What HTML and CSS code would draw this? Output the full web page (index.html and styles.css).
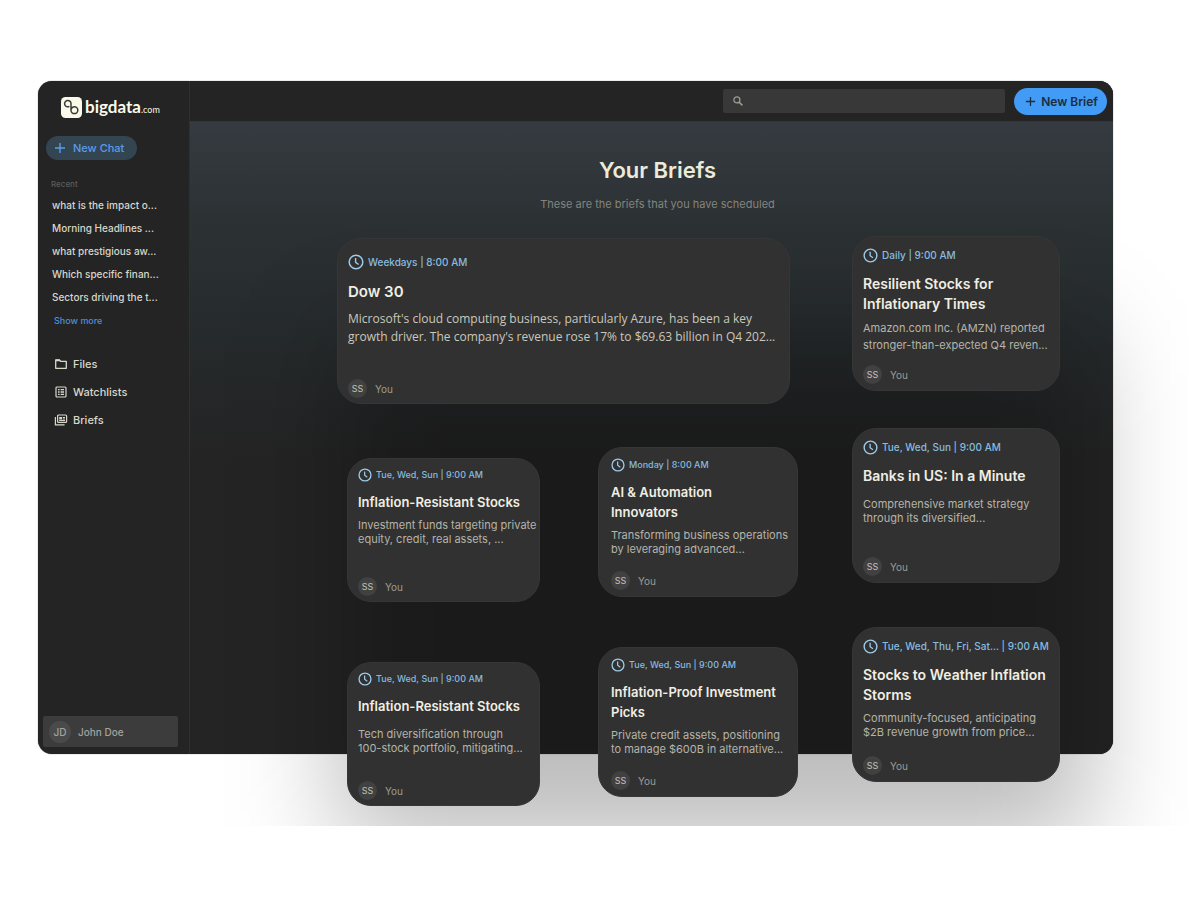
FILE: index.html
```html
<!DOCTYPE html>
<html lang="en">
<head>
    <meta charset="UTF-8">
    <title>Your Briefs</title>
    <link rel="stylesheet" href="styles.css">
</head>
<body>

<svg class="sprite" aria-hidden="true">
    <symbol id="clock" viewBox="0 0 16 16">
        <circle cx="8" cy="8" r="6.8" fill="none" stroke="currentColor" stroke-width="1.5"/>
        <path d="M7.6 4v4.3l3 2.2" fill="none" stroke="currentColor" stroke-width="1.4"/>
    </symbol>
    <symbol id="plus" viewBox="0 0 12 12">
        <path d="M6 1v10M1 6h10" fill="none" stroke="currentColor" stroke-width="1.4"/>
    </symbol>
</svg>

<div class="stage">
    <div class="app">
        <aside class="sidebar">
            <a class="logo" href="#">
                <svg viewBox="0 0 21 21" width="21" height="21" aria-hidden="true">
                    <rect width="21" height="21" rx="4.5" fill="#fbf9ea"/>
                    <path d="M8.4 9.4A3.2 3.2 0 1 1 10 6.6V13.2A3.4 3.4 0 1 0 13.4 9.8Q11 9.8 10 12.6" fill="none" stroke="#3a3a37" stroke-width="1.5"/>
                </svg>
                <span class="logo-name">bigdata<small>.com</small></span>
            </a>

            <button class="new-chat" type="button">
                <svg width="12" height="12" aria-hidden="true"><use href="#plus"/></svg>
                New Chat
            </button>

            <h2 class="recent-title">Recent</h2>
            <ul class="recent">
                <li><a href="#">what is the impact o...</a></li>
                <li><a href="#">Morning Headlines ...</a></li>
                <li><a href="#">what prestigious aw...</a></li>
                <li><a href="#">Which specific finan...</a></li>
                <li><a href="#">Sectors driving the t...</a></li>
            </ul>
            <a class="show-more" href="#">Show more</a>

            <nav class="nav">
                <a href="#">
                    <svg viewBox="0 0 14 14" width="14" height="14" aria-hidden="true">
                        <path d="M1.7 3h3.8l1.2 1.4h5.6v6.9H1.7z" fill="none" stroke="currentColor" stroke-width="1.3" stroke-linejoin="round"/>
                        <path d="M1.7 2.6h3.9l1.2 1.6H1.7z" fill="currentColor"/>
                    </svg>
                    Files
                </a>
                <a href="#">
                    <svg viewBox="0 0 14 14" width="14" height="14" aria-hidden="true">
                        <rect x="2" y="2" width="10" height="10" rx="1" fill="none" stroke="currentColor" stroke-width="1.2"/>
                        <path d="M4 4.7h1.6M4 7h1.6M4 9.3h1.6M6.6 4.7H10M6.6 7H10M6.6 9.3H10" stroke="currentColor" stroke-width="1.3"/>
                    </svg>
                    Watchlists
                </a>
                <a href="#">
                    <svg viewBox="0 0 14 14" width="14" height="14" aria-hidden="true">
                        <rect x="3.6" y="2" width="9" height="7.4" rx="1" fill="none" stroke="currentColor" stroke-width="1.2"/>
                        <path d="M1.4 4v7.8h9.2" fill="none" stroke="currentColor" stroke-width="1.2"/>
                        <path d="M5.2 4h3v2.4h-3zM9 4h2v1H9zM9 5.6h2v1H9zM5.2 7.1H11v.9H5.2z" fill="currentColor"/>
                    </svg>
                    Briefs
                </a>
            </nav>

            <button class="user" type="button">
                <span class="user-avatar">JD</span>
                John Doe
            </button>
        </aside>

        <main class="main">
            <header class="topbar">
                <label class="search">
                    <svg viewBox="0 0 10 10" width="10" height="10" role="img" aria-label="Search">
                        <circle cx="3.9" cy="3.9" r="3" fill="none" stroke="currentColor" stroke-width="1.3"/>
                        <path d="M6.1 6.1L9.4 9.4" stroke="currentColor" stroke-width="1.5"/>
                    </svg>
                    <input type="search">
                </label>
                <button class="new-brief" type="button">
                    <svg width="11" height="11" aria-hidden="true"><use href="#plus"/></svg>
                    New Brief
                </button>
            </header>

            <div class="intro">
                <h1>Your Briefs</h1>
                <p>These are the briefs that you have scheduled</p>
            </div>

            <div class="board">
                <div class="left">
                    <article class="card wide">
                        <div class="time"><svg width="16" height="16" aria-hidden="true"><use href="#clock"/></svg>Weekdays | 8:00 AM</div>
                        <h2>Dow 30</h2>
                        <p>Microsoft's cloud computing business, particularly Azure, has been a key<br>growth driver. The company's revenue rose 17% to $69.63 billion in Q4 202...</p>
                        <footer><span class="avatar">SS</span>You</footer>
                    </article>

                    <div class="pair">
                        <div class="column first">
                            <article class="card">
                                <div class="time"><svg width="14" height="14" aria-hidden="true"><use href="#clock"/></svg>Tue, Wed, Sun | 9:00 AM</div>
                                <h2>Inflation-Resistant Stocks</h2>
                                <p>Investment funds targeting private<br>equity, credit, real assets, ...</p>
                                <footer><span class="avatar">SS</span>You</footer>
                            </article>
                            <article class="card roomy">
                                <div class="time"><svg width="14" height="14" aria-hidden="true"><use href="#clock"/></svg>Tue, Wed, Sun | 9:00 AM</div>
                                <h2>Inflation-Resistant Stocks</h2>
                                <p>Tech diversification through<br>100-stock portfolio, mitigating...</p>
                                <footer><span class="avatar">SS</span>You</footer>
                            </article>
                        </div>
                        <div class="column second">
                            <article class="card">
                                <div class="time"><svg width="14" height="14" aria-hidden="true"><use href="#clock"/></svg>Monday | 8:00 AM</div>
                                <h2>AI &amp; Automation<br>Innovators</h2>
                                <p>Transforming business operations<br>by leveraging advanced...</p>
                                <footer><span class="avatar">SS</span>You</footer>
                            </article>
                            <article class="card">
                                <div class="time"><svg width="14" height="14" aria-hidden="true"><use href="#clock"/></svg>Tue, Wed, Sun | 9:00 AM</div>
                                <h2>Inflation-Proof Investment<br>Picks</h2>
                                <p>Private credit assets, positioning<br>to manage $600B in alternative...</p>
                                <footer><span class="avatar">SS</span>You</footer>
                            </article>
                        </div>
                    </div>
                </div>

                <div class="right">
                    <article class="card tall-text">
                        <div class="time"><svg width="15" height="15" aria-hidden="true"><use href="#clock"/></svg>Daily | 9:00 AM</div>
                        <h2>Resilient Stocks for<br>Inflationary Times</h2>
                        <p>Amazon.com Inc. (AMZN) reported<br>stronger-than-expected Q4 reven...</p>
                        <footer><span class="avatar">SS</span>You</footer>
                    </article>
                    <article class="card roomy">
                        <div class="time"><svg width="15" height="15" aria-hidden="true"><use href="#clock"/></svg>Tue, Wed, Sun | 9:00 AM</div>
                        <h2>Banks in US: In a Minute</h2>
                        <p>Comprehensive market strategy<br>through its diversified...</p>
                        <footer><span class="avatar">SS</span>You</footer>
                    </article>
                    <article class="card">
                        <div class="time"><svg width="15" height="15" aria-hidden="true"><use href="#clock"/></svg>Tue, Wed, Thu, Fri, Sat... | 9:00 AM</div>
                        <h2>Stocks to Weather Inflation<br>Storms</h2>
                        <p>Community-focused, anticipating<br>$2B revenue growth from price...</p>
                        <footer><span class="avatar">SS</span>You</footer>
                    </article>
                </div>
            </div>
        </main>
    </div>
</div>

</body>
</html>
```
FILE: styles.css
```css
* {
    box-sizing: border-box;
}
body {
    margin: 0;
    background: #fff;
    font-family: Inter, "Liberation Sans", sans-serif;
    color: #d8d7ca;
}
h1, h2, p, ul {
    margin: 0;
    padding: 0;
}
a {
    color: inherit;
    text-decoration: none;
}
button {
    border: 0;
    font-family: inherit;
    cursor: pointer;
}
.sprite {
    display: none;
}
.stage {
    margin-right: 12px;
    padding: 81px 75px 72px 38px;
    overflow: hidden;
}
.app {
    display: grid;
    grid-template-columns: 152px minmax(0, 1fr);
    background: #242424;
    border-radius: 14px;
    box-shadow: 0 0 1px #444;
}

/* sidebar */
.sidebar {
    display: flex;
    flex-direction: column;
    align-items: flex-start;
    padding: 16px 11px 7px 5px;
    border-right: 1px solid #303030;
}
.logo {
    display: flex;
    align-items: center;
    gap: 3px;
    height: 21px;
    margin-left: 18px;
    color: #fbf9ea;
}
.logo-name {
    font-family: Lato, sans-serif;
    font-size: 17px;
    font-weight: 700;
    line-height: 21px;
}
.logo-name small {
    font-size: 9px;
    font-weight: 400;
}
.new-chat {
    display: flex;
    align-items: center;
    gap: 7px;
    height: 24px;
    margin: 18px 0 0 3px;
    padding: 0 13px 0 8px;
    border-radius: 12px;
    background: #344552;
    color: #5a9ce8;
    font-size: 11px;
    font-weight: 500;
}
.recent-title {
    margin: 18px 0 4px 8px;
    color: #5c5c59;
    font-size: 8px;
    font-weight: 500;
    line-height: 12px;
}
.recent {
    margin-left: 9px;
    list-style: none;
    font-size: 10px;
    font-weight: 500;
    line-height: 23px;
    white-space: nowrap;
}
.show-more {
    margin: 4px 0 0 11px;
    color: #4f8fd8;
    font-size: 9px;
    font-weight: 500;
    line-height: 16px;
}
.nav {
    display: flex;
    flex-direction: column;
    margin: 21px 0 0 11px;
    font-size: 11px;
    font-weight: 500;
    line-height: 28px;
}
.nav a {
    display: flex;
    align-items: center;
    gap: 5px;
}
.user {
    display: flex;
    align-items: center;
    gap: 7px;
    width: 100%;
    height: 31px;
    margin-top: auto;
    padding: 0 6px;
    border-radius: 2px;
    background: #3c3c3c;
    color: #a3a29c;
    font-size: 10px;
    font-weight: 500;
}
.user-avatar {
    width: 22px;
    border-radius: 50%;
    background: #4a4a4a;
    line-height: 22px;
}

/* main area */
.main {
    border-radius: 0 14px 14px 0;
    background: linear-gradient(#353b40 41px, #2c3134 140px, #262b2d 240px, #242424 380px);
}
.topbar {
    display: flex;
    justify-content: flex-end;
    align-items: center;
    gap: 9px;
    height: 41px;
    padding: 0 6px;
    border-bottom: 1px solid #363636;
    border-radius: 0 14px 0 0;
    background: #242424;
}
.search {
    display: flex;
    align-items: center;
    width: 31%;
    height: 24px;
    padding: 0 10px;
    border-radius: 2px;
    background: #383838;
    color: #9b9a92;
}
.search input {
    flex: 1;
    min-width: 0;
    border: 0;
    outline: 0;
    background: none;
    color: inherit;
}
.new-brief {
    display: flex;
    align-items: center;
    gap: 5px;
    height: 27px;
    padding: 0 9px 0 11px;
    border-radius: 14px;
    background: #429bf5;
    color: #1c2d3f;
    font-size: 12px;
    font-weight: 600;
    white-space: nowrap;
}
.intro {
    padding: 34px 0 24px 12px;
    text-align: center;
}
.intro h1 {
    color: #ecead9;
    font-size: 22px;
    font-weight: 600;
    line-height: 28px;
}
.intro p {
    margin-top: 12px;
    color: #83847f;
    font-size: 11px;
    line-height: 16px;
}

/* cards hang over the lower edge of the window */
.board {
    position: relative;
    isolation: isolate;
    display: grid;
    grid-template-columns: minmax(0, 461fr) minmax(0, 208fr);
    gap: 54px;
    margin: 0 53px -52px 147px;
}
.board::before {
    content: "";
    position: absolute;
    z-index: -1;
    inset: 100px -30px -40px 0;
    background: rgba(0, 0, 0, 0.26);
    filter: blur(52px);
}
.left {
    padding-top: 2px;
}
.pair {
    display: grid;
    grid-template-columns: minmax(0, 193fr) minmax(0, 200fr);
    gap: 58px;
    margin-left: 10px;
}
.column {
    display: flex;
    flex-direction: column;
}
.first {
    gap: 60px;
    padding-top: 54px;
}
.second {
    gap: 50px;
    padding-top: 43px;
}
.right {
    display: grid;
    grid-template-rows: 192px 199px auto;
    align-items: start;
}
.card {
    display: flex;
    flex-direction: column;
    min-height: 155px;
    padding: 10px 10px 6px;
    border: 1px solid #363636;
    border-radius: 24px;
    background: #313131;
    white-space: nowrap;
}
.first .card {
    min-height: 144px;
    padding: 8px 10px 5px;
}
.second .card {
    min-height: 150px;
    padding: 9px 12px 6px;
}
.time {
    display: flex;
    align-items: center;
    gap: 4px;
    color: #85bce0;
    font-size: 9px;
    font-weight: 500;
    line-height: 16px;
}
.time svg {
    color: #9dcbe8;
}
.card h2 {
    margin-top: 9px;
    color: #f0eee2;
    font-size: 13px;
    font-weight: 600;
    line-height: 20px;
}
.card p {
    margin-top: 6px;
    color: #b5b4aa;
    font-size: 11px;
    line-height: 14px;
}
.card footer {
    display: flex;
    align-items: center;
    gap: 8px;
    margin-top: auto;
    color: #9c9b92;
    font-size: 10px;
}
.avatar {
    width: 19px;
    border-radius: 50%;
    background: #414141;
    color: #c4c3bb;
    font-size: 9px;
    line-height: 19px;
    text-align: center;
}
.right .time {
    font-size: 10px;
}
.right h2 {
    margin-top: 11px;
    font-size: 14px;
}
.card.roomy p {
    margin-top: 11px;
}
.tall-text p {
    line-height: 17px;
}
.card.wide {
    min-height: 166px;
    margin-right: 8px;
    padding: 15px 10px 5px;
}
.wide .time {
    font-size: 10px;
}
.wide h2 {
    margin-top: 12px;
    font-size: 15px;
}
.wide p {
    margin-top: 8px;
    color: #c9c8bd;
    font-family: "Open Sans", "Noto Sans", sans-serif;
    font-size: 12px;
    line-height: 18px;
}
```
